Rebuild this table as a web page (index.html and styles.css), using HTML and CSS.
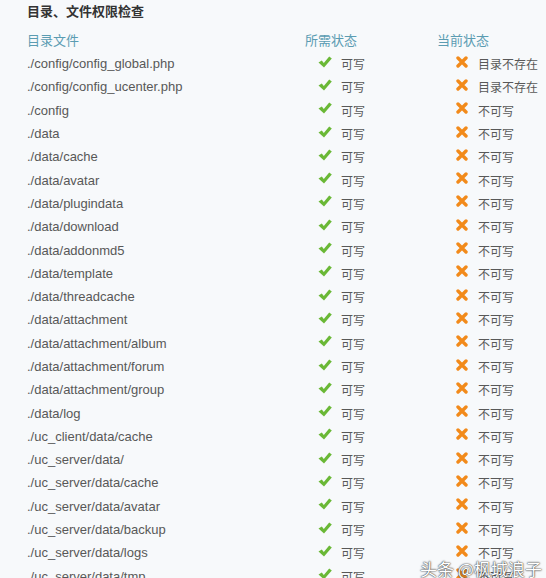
FILE: index.html
```html
<!DOCTYPE html>
<html lang="zh-CN">
<head>
    <meta charset="UTF-8" />
    <title>目录、文件权限检查</title>
    <link rel="stylesheet" href="styles.css">
</head>
<body>
    <div class="check-box">
        <h2 class="check-title">目录、文件权限检查</h2>
        <div class="check-table" id="check-table">
            <div class="row head">
                <span>目录文件</span>
                <span>所需状态</span>
                <span>当前状态</span>
            </div>
        </div>
    </div>
    <div class="watermark">头条 @枫城浪子</div>

    <script>
        const rows = [
            ['./config/config_global.php', '目录不存在'],
            ['./config/config_ucenter.php', '目录不存在'],
            ['./config', '不可写'],
            ['./data', '不可写'],
            ['./data/cache', '不可写'],
            ['./data/avatar', '不可写'],
            ['./data/plugindata', '不可写'],
            ['./data/download', '不可写'],
            ['./data/addonmd5', '不可写'],
            ['./data/template', '不可写'],
            ['./data/threadcache', '不可写'],
            ['./data/attachment', '不可写'],
            ['./data/attachment/album', '不可写'],
            ['./data/attachment/forum', '不可写'],
            ['./data/attachment/group', '不可写'],
            ['./data/log', '不可写'],
            ['./uc_client/data/cache', '不可写'],
            ['./uc_server/data/', '不可写'],
            ['./uc_server/data/cache', '不可写'],
            ['./uc_server/data/avatar', '不可写'],
            ['./uc_server/data/backup', '不可写'],
            ['./uc_server/data/logs', '不可写'],
            ['./uc_server/data/tmp', '不可写']
        ];
        const okIcon = '<svg class="ico" width="14" height="12" viewBox="0 0 14 12"><path d="M0.5 6.5 L3.8 4.6 L5.8 7 L11.2 0.6 L13.8 2.4 L6 11.4 Z" fill="#6ab836"/></svg>';
        const noIcon = '<svg class="ico" width="12" height="12" viewBox="0 0 12 12"><path d="M2 2 L10 10 M10 2 L2 10" stroke="#f28a1a" stroke-width="3.4" stroke-linecap="round"/></svg>';
        const table = document.getElementById('check-table');
        rows.forEach(r => {
            const row = document.createElement('div');
            row.className = 'row';
            row.innerHTML = `
                <span class="path">${r[0]}</span>
                <span class="need">${okIcon}<em>可写</em></span>
                <span class="cur">${noIcon}<em>${r[1]}</em></span>
            `;
            table.appendChild(row);
        });
    </script>
</body>
</html>
```

FILE: styles.css
```css
html, body {
    margin: 0;
    height: 100%;
    overflow: hidden;
}
body {
    background-color: #f7f9fb;
    font-family: "Liberation Sans", "Noto Sans CJK SC", sans-serif;
    font-size: 13px;
    color: #585858;
}
.check-box {
    padding: 3px 0 0 27px;
}
.check-title {
    margin: 0 0 6px;
    font-size: 13px;
    font-weight: 700;
    color: #333;
    line-height: 18px;
}
.row {
    display: grid;
    grid-template-columns: 278px 132px 1fr;
    height: 23.3px;
    align-items: center;
    white-space: nowrap;
}
.row.head {
    color: #5b9cb2;
    height: 25px;
}
.need, .cur {
    display: flex;
    align-items: center;
}
.need { padding-left: 13px; }
.cur { padding-left: 19px; }
.ico { flex-shrink: 0; margin-top: -4px; }
.need em, .cur em {
    font-style: normal;
    font-family: "Noto Sans CJK SC", sans-serif;
    font-size: 12px;
}
.need em { margin-left: 9px; }
.cur em { margin-left: 10px; }
.watermark {
    position: absolute;
    left: 420px;
    top: 556px;
    font-family: "Noto Sans CJK SC", sans-serif;
    font-size: 17px;
    color: #fff;
    text-shadow: 0 0 2px #333, 0 0 1px #333;
}
```
